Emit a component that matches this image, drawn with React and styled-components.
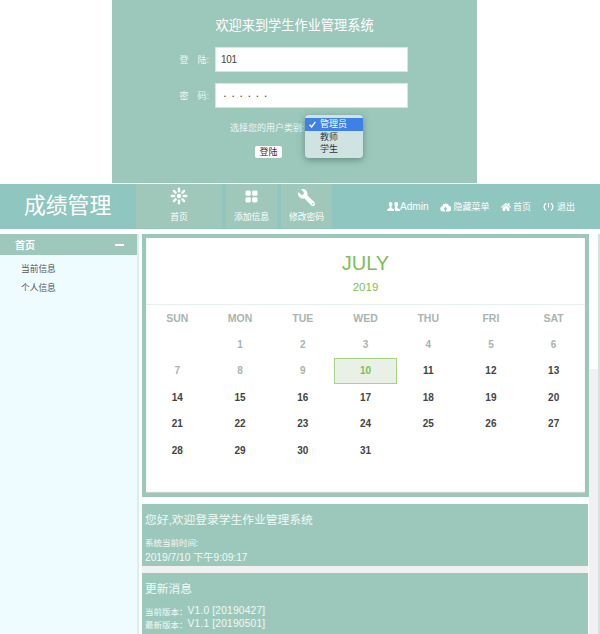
import React from "react";
import styled, { createGlobalStyle } from "styled-components";
import { FaHome, FaWrench } from "react-icons/fa";

const GlobalStyle = createGlobalStyle`
  html, body {
    margin: 0;
    height: 634px;
    overflow: hidden;
    background: #fff;
    font-family: "Liberation Sans", "Noto Sans CJK SC", sans-serif;
  }
  * { box-sizing: border-box; }
`;

const LoginPanel = styled.section`
  width: 365px;
  height: 183px;
  margin: 0 0 1px 112px;
  padding-top: 17px;
  background: #9cc8bc;
  color: #fff;
`;
const LoginTitle = styled.h1`
  margin: 0 0 13px;
  font-size: 13.2px;
  line-height: 17px;
  font-weight: 400;
  text-align: center;
`;
const FieldRow = styled.div`
  display: flex;
  align-items: center;
  gap: 6px;
  height: 25px;
  margin-bottom: 11px;
`;
const FieldLabel = styled.label`
  width: 97px;
  font-size: 9px;
  text-align: right;
  color: #eef7f3;
`;
const TextInput = styled.input`
  width: 193px;
  height: 25px;
  padding: 0 0 0 ${(props) => (props.type === "password" ? 8 : 5)}px;
  border: 1px solid #d3e6e0;
  outline: none;
  background: #fff;
  color: #444;
  font-family: inherit;
  font-size: ${(props) => (props.type === "password" ? "5px" : "10px")};
  letter-spacing: ${(props) => (props.type === "password" ? "6.4px" : "-0.3px")};
`;
const RoleRow = styled.div`
  display: flex;
  align-items: center;
  height: 12px;
  margin-top: 13px;
  padding-left: 118px;
  font-size: 9px;
  color: #eef7f3;
`;
const RoleField = styled.div`
  position: relative;
  width: 58px;
  height: 12px;
`;
const RoleMenu = styled.ul`
  position: absolute;
  top: -6px;
  left: 0;
  width: 58px;
  height: 43px;
  margin: 0;
  padding: 3px 0 0;
  list-style: none;
  border-radius: 4px;
  background: #cfe4e2;
  box-shadow: 0 2px 7px rgba(50, 80, 70, 0.5);
`;
const RoleOption = styled.li`
  position: relative;
  height: 12.5px;
  padding-left: 15.5px;
  font-size: 9px;
  line-height: 12.5px;
  color: ${(props) => (props.$active ? "#fff" : "#333")};
  background: ${(props) => (props.$active ? "#3f7fe8" : "transparent")};
`;
const CheckMark = styled.svg`
  position: absolute;
  left: 4px;
  top: 3px;
  width: 7px;
  height: 7px;
`;
const LoginButton = styled.button`
  display: block;
  width: 27px;
  height: 12px;
  margin: 13px 0 0 143px;
  padding: 0;
  border: 0;
  border-radius: 2px;
  background: #fff;
  color: #333;
  font-family: inherit;
  font-size: 9px;
  line-height: 12px;
`;

const Header = styled.header`
  display: flex;
  height: 45px;
  background: #8fc7c0;
  color: #fff;
`;
const Logo = styled.div`
  width: 136px;
  padding-left: 24px;
  font-size: 21.8px;
  line-height: 43px;
`;
const Nav = styled.nav`
  display: flex;
  gap: 4px;
  height: 44px;
`;
const NavItem = styled.a`
  display: flex;
  flex-direction: column;
  align-items: center;
  width: ${(props) => props.$width}px;
  padding-top: 2px;
  background: #9fc8bb;
  font-size: 8.8px;
`;
const NavIcon = styled.span`
  display: flex;
  align-items: center;
  justify-content: center;
  width: 20px;
  height: 20px;
  margin-bottom: 4px;
  font-size: 17px;
  transform: ${(props) => (props.$flip ? "scaleX(-1) translateY(1px)" : "none")};
`;
const Actions = styled.div`
  display: flex;
  align-items: center;
  gap: 12px;
  height: 45px;
  margin-left: auto;
  padding: 0 25px 0 0;
  font-size: 9px;
`;
const ActionLink = styled.a`
  display: flex;
  align-items: center;
  gap: ${(props) => props.$gap ?? 2}px;
  font-size: ${(props) => props.$size ?? 9}px;
`;

const Content = styled.div`
  display: flex;
  margin-top: 5px;
`;
const Sidebar = styled.aside`
  width: 139px;
  height: 400px;
  margin-right: 3px;
  background: #eefbff;
  border-right: 2px solid #dcefee;
`;
const SideTitle = styled.div`
  display: flex;
  align-items: center;
  justify-content: space-between;
  height: 21px;
  padding: 0 13px 0 15px;
  background: #9dc8bb;
  color: #fff;
  font-size: 10px;
  font-weight: 700;
`;
const Minus = styled.i`
  width: 9px;
  height: 2px;
  background: #fff;
`;
const SideList = styled.ul`
  margin: 0;
  padding: 5px 0 0 21px;
  list-style: none;
`;
const SideItem = styled.li`
  height: 19px;
  font-size: 8.7px;
  line-height: 19px;
  color: #555;
`;

const Main = styled.main`
  width: 447px;
`;
const Gutter = styled.div`
  flex: 1;
  height: 400px;
  border-right: 2px solid #cfe5e0;
  background: linear-gradient(#fff 135px, #f1f1f1 135px);
`;
const CalendarCard = styled.section`
  height: 263px;
  border: 4px solid #9cc8bc;
  background: #fff;
  box-shadow: inset 0 -1px 1px rgba(90, 110, 100, 0.35);
`;
const CalendarHead = styled.div`
  height: 67px;
  padding-top: 13px;
  border-bottom: 1px solid #e6eeee;
  text-align: center;
  color: #7cbf55;
`;
const Month = styled.div`
  font-size: 20px;
  line-height: 24px;
`;
const Year = styled.div`
  margin-top: 5px;
  font-size: 11.5px;
  line-height: 14px;
`;
const Grid = styled.div`
  display: grid;
  grid-template-columns: repeat(7, 1fr);
  grid-auto-rows: 26.4px;
`;
const WeekDay = styled.div`
  display: flex;
  align-items: center;
  justify-content: center;
  font-size: 10.5px;
  font-weight: 700;
  color: #a9b5af;
`;
const Day = styled.div`
  display: flex;
  align-items: center;
  justify-content: center;
  font-size: 10px;
  font-weight: 700;
  color: ${(props) => (props.$today ? "#7cbf55" : props.$past ? "#a9b3ae" : "#444")};
  background: ${(props) => (props.$today ? "#e9f1e6" : "transparent")};
  border: ${(props) => (props.$today ? "1px solid #a6d586" : "0")};
`;

const Notices = styled.div`
  width: 446px;
  margin-top: 7px;
  background: #f1f1f1;
`;
const Notice = styled.section`
  height: ${(props) => props.$height}px;
  margin-bottom: 7px;
  padding: 7px 3px 0;
  background: #9cc8bc;
  color: #f2f9f6;
`;
const NoticeTitle = styled.h2`
  margin: 0 0 7px;
  font-size: 11.75px;
  line-height: 17px;
  font-weight: 400;
`;
const NoticeLine = styled.div`
  display: flex;
  align-items: center;
  height: ${(props) => props.$height ?? 13}px;
  font-size: 10.2px;
  letter-spacing: ${(props) => props.$spacing ?? 0}px;
`;
const NoticeLabel = styled.span`
  font-size: 8.5px;
  letter-spacing: 0;
`;

const weekDays = ["SUN", "MON", "TUE", "WED", "THU", "FRI", "SAT"];
const days = Array.from({ length: 31 }, (_, i) => i + 1);

const FlowerIcon = () => (
  <svg width="18" height="18" viewBox="0 0 18 18">
    {[0, 45, 90, 135, 180, 225, 270, 315].map((deg) => (
      <rect key={deg} x="7.8" y="0.6" width="2.4" height="4.8" rx="1.2" fill="#fff" transform={`rotate(${deg} 9 9)`} />
    ))}
    <circle cx="9" cy="9" r="2.2" fill="#fff" />
  </svg>
);

const GridIcon = () => (
  <svg width="13" height="13" viewBox="0 0 13 13" fill="#fff">
    <rect x="0.5" y="0.5" width="5.3" height="5.3" rx="1.4" />
    <rect x="7.2" y="0.5" width="5.3" height="5.3" rx="1.4" />
    <rect x="0.5" y="7.2" width="5.3" height="5.3" rx="1.4" />
    <rect x="7.2" y="7.2" width="5.3" height="5.3" rx="1.4" />
  </svg>
);

const UsersIcon = () => (
  <svg width="13" height="10" viewBox="0 0 13 10" fill="#fff">
    <path d="M3.6 0a1.7 1.7 0 0 1 1.7 1.9c0 1-.4 2-.8 2.6v1.3L7 7.4V9H0V7.4l2.7-1.6V4.5c-.4-.6-.8-1.6-.8-2.6A1.7 1.7 0 0 1 3.6 0z" />
    <path d="M9.4 0a1.7 1.7 0 0 1 1.7 1.9c0 1-.4 2-.8 2.6v1.3l2.7 1.6V9H8V7.4L7.2 6.7l.9-.9V4.5c-.4-.6-.8-1.6-.8-2.6A1.7 1.7 0 0 1 9.4 0z" />
  </svg>
);

const CloudIcon = () => (
  <svg width="11" height="10" viewBox="0 0 12 10">
    <path d="M3 10a3 3 0 0 1-.6-5.9A4 4 0 0 1 9.9 3.5 3.3 3.3 0 0 1 9.2 10z" fill="#fff" />
    <path d="M6.8 10V7.4h1.5L6 4.6 3.7 7.4h1.5V10z" fill="#8fc7c0" />
  </svg>
);

const PowerIcon = () => (
  <svg width="11" height="10" viewBox="0 0 11 10" fill="none" stroke="#fff" strokeWidth="1.2">
    <path d="M3 1.2a4.3 4.3 0 0 0 0 7.2" />
    <path d="M8 1.2a4.3 4.3 0 0 1 0 7.2" />
    <path d="M5.5 1v4.5" />
  </svg>
);

const App = () => {
  return (
    <>
      <GlobalStyle />
      <LoginPanel>
        <LoginTitle>欢迎来到学生作业管理系统</LoginTitle>
        <FieldRow>
          <FieldLabel>登　陆:</FieldLabel>
          <TextInput type="text" defaultValue="101" readOnly />
        </FieldRow>
        <FieldRow>
          <FieldLabel>密　码:</FieldLabel>
          <TextInput type="password" defaultValue="123456" readOnly />
        </FieldRow>
        <RoleRow>
          选择您的用户类别:
          <RoleField>
            <RoleMenu>
              <RoleOption $active>
                <CheckMark viewBox="0 0 7 7" fill="none" stroke="#fff" strokeWidth="1.3">
                  <path d="M0.6 3.8 2.6 6 6.4 0.8" />
                </CheckMark>
                管理员
              </RoleOption>
              <RoleOption>教师</RoleOption>
              <RoleOption>学生</RoleOption>
            </RoleMenu>
          </RoleField>
        </RoleRow>
        <LoginButton>登陆</LoginButton>
      </LoginPanel>

      <Header>
        <Logo>成绩管理</Logo>
        <Nav>
          <NavItem $width={86}>
            <NavIcon><FlowerIcon /></NavIcon>
            首页
          </NavItem>
          <NavItem $width={51}>
            <NavIcon><GridIcon /></NavIcon>
            添加信息
          </NavItem>
          <NavItem $width={51}>
            <NavIcon $flip><FaWrench /></NavIcon>
            修改密码
          </NavItem>
        </Nav>
        <Actions>
          <ActionLink $size={10} $gap={0}><UsersIcon />Admin</ActionLink>
          <ActionLink><CloudIcon />隐藏菜单</ActionLink>
          <ActionLink $gap={1.5}><FaHome size={10} />首页</ActionLink>
          <ActionLink $gap={3}><PowerIcon />退出</ActionLink>
        </Actions>
      </Header>

      <Content>
        <Sidebar>
          <SideTitle>首页<Minus /></SideTitle>
          <SideList>
            <SideItem>当前信息</SideItem>
            <SideItem>个人信息</SideItem>
          </SideList>
        </Sidebar>
        <Main>
          <CalendarCard>
            <CalendarHead>
              <Month>JULY</Month>
              <Year>2019</Year>
            </CalendarHead>
            <Grid>
              {weekDays.map((d) => <WeekDay key={d}>{d}</WeekDay>)}
              <span />
              {days.map((d) => (
                <Day key={d} $past={d < 10} $today={d === 10}>{d}</Day>
              ))}
            </Grid>
          </CalendarCard>
          <Notices>
            <Notice $height={62}>
              <NoticeTitle>您好,欢迎登录学生作业管理系统</NoticeTitle>
              <NoticeLine $height={14}><NoticeLabel>系统当前时间:</NoticeLabel></NoticeLine>
              <NoticeLine $height={14}>2019/7/10&nbsp;下午9:09:17</NoticeLine>
            </Notice>
            <Notice $height={70}>
              <NoticeTitle>更新消息</NoticeTitle>
              <NoticeLine $spacing={0.2}><NoticeLabel>当前版本：</NoticeLabel>V1.0 [20190427]</NoticeLine>
              <NoticeLine $spacing={0.2}><NoticeLabel>最新版本：</NoticeLabel>V1.1 [20190501]</NoticeLine>
            </Notice>
          </Notices>
        </Main>
        <Gutter />
      </Content>
    </>
  );
};

export default App;
